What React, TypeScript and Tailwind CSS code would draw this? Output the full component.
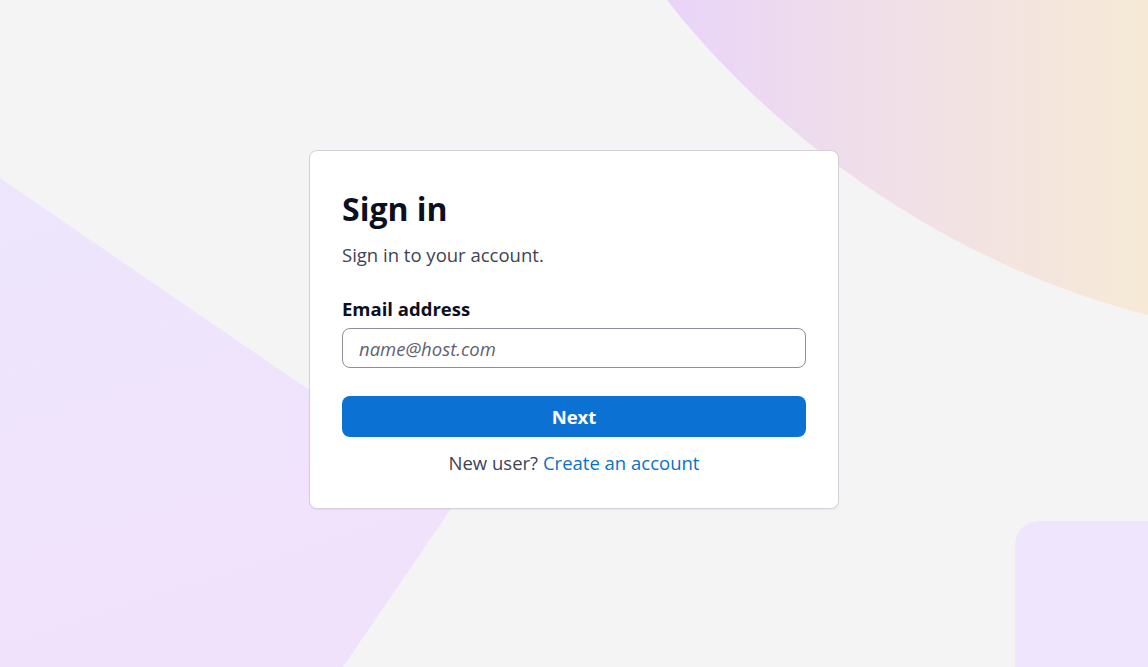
import React from "react";

export default function App() {
  return (
    <div
      className="relative flex min-h-screen items-center justify-center overflow-hidden bg-[#f5f4f5] pb-2"
      style={{ fontFamily: '"Open Sans", "Noto Sans", sans-serif' }}
    >
      <Backdrop />
      <SignInCard />
    </div>
  );
}

function Backdrop() {
  return (
    <>
      <svg
        className="pointer-events-none absolute inset-0 h-full w-full"
        viewBox="0 0 1148 667"
        preserveAspectRatio="none"
      >
        <defs>
          <linearGradient id="warm" x1="0" y1="0" x2="1" y2="0">
            <stop offset="0" stopColor="#e9d4f9" />
            <stop offset="0.45" stopColor="#f0dfe8" />
            <stop offset="1" stopColor="#f6ead6" />
          </linearGradient>
          <linearGradient id="lav" x1="0" y1="0" x2="0.3" y2="1">
            <stop offset="0" stopColor="#ede6fd" />
            <stop offset="1" stopColor="#f1e2fb" />
          </linearGradient>
        </defs>
        {/* top right arc */}
        <path d="M667 0 C 760 120 930 260 1148 315 L 1148 0 Z" fill="url(#warm)" />
        {/* left wedge */}
        <path d="M0 178 L 461 494 L 343 667 L 0 667 Z" fill="url(#lav)" />
      </svg>
      {/* bottom right tile */}
      <div className="absolute left-[1015px] top-[521px] h-[200px] w-[200px] rounded-[24px] bg-[#efe5fd]" />
    </>
  );
}

function SignInCard() {
  return (
    <div className="relative w-[530px] rounded-lg border border-[#d4d1da] bg-white px-8 pb-[31px] pt-[39px] shadow-[0_1px_2px_rgba(40,30,60,0.06)]">
      <h1 className="text-[32px] font-bold leading-[38px] text-[#0b0f1f]">Sign in</h1>
      <p className="mt-[13px] text-[18.5px] leading-7 text-[#3d4354]">Sign in to your account.</p>

      <label htmlFor="email" className="mt-[26px] block text-[18.5px] font-bold leading-7 text-[#0b0f1f]">
        Email address
      </label>
      <input
        id="email"
        type="email"
        placeholder="name@host.com"
        className="mt-[5px] block h-10 w-full rounded-lg border border-[#8b8f9c] bg-white px-4 text-[18.5px] text-[#0b0f1f] outline-none placeholder:italic placeholder:text-[#5f6370]"
      />

      <button className="mt-7 flex h-[41px] w-full items-center justify-center rounded-lg bg-[#0b72d3] text-[18.5px] font-bold text-white">
        Next
      </button>

      <p className="mt-3 text-center text-[18.5px] leading-7 text-[#3d4354]">
        New user? <a href="#" className="text-[#0b6fc9]">Create an account</a>
      </p>
    </div>
  );
}
